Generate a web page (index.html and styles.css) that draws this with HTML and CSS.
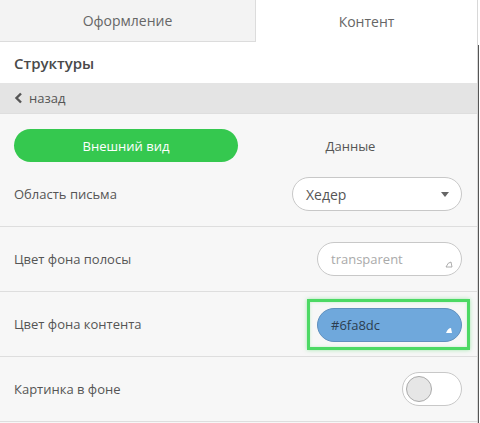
FILE: index.html
```
<!DOCTYPE html>
<html lang="ru">
<head>
    <meta charset="UTF-8">
    <meta name="viewport" content="width=device-width, initial-scale=1.0">
    <title>Контент</title>
    <link rel="stylesheet" href="styles.css">
</head>
<body>
    <div class="wrap">
        <div class="panel">
            <div class="tabs">
                <div class="tab">Оформление</div>
                <div class="tab active">Контент</div>
            </div>
            <div class="title">Структуры</div>
            <div class="back">
                <svg width="9" height="12" viewBox="0 0 9 12"><path d="M7 1.5 L2.5 6 L7 10.5" fill="none" stroke="#555" stroke-width="2.4"/></svg>
                <span>назад</span>
            </div>
            <div class="content">
                <div class="switcher">
                    <div class="seg on">Внешний вид</div>
                    <div class="seg">Данные</div>
                </div>
                <div class="row">
                    <span class="label">Область письма</span>
                    <div class="select">
                        <span>Хедер</span>
                        <svg width="8" height="5" viewBox="0 0 8 5"><path d="M0 0 H8 L4 5 Z" fill="#666"/></svg>
                    </div>
                </div>
                <div class="row">
                    <span class="label">Цвет фона полосы</span>
                    <div class="field empty">
                        <span>transparent</span>
                        <svg class="grip" width="8" height="7" viewBox="0 0 8 7"><path d="M1 6 Q3 1 6 1 L7 6 Z" fill="none" stroke="#999" stroke-width="0.8"/></svg>
                    </div>
                </div>
                <div class="row">
                    <span class="label">Цвет фона контента</span>
                    <div class="focus">
                        <div class="field filled" style="background-color: #6fa8dc;">
                            <span>#6fa8dc</span>
                            <svg class="grip" width="8" height="7" viewBox="0 0 8 7"><path d="M1 6 Q3 1 6 1 L7 6 Z" fill="#fff"/></svg>
                        </div>
                    </div>
                </div>
                <div class="row">
                    <span class="label">Картинка в фоне</span>
                    <div class="toggle"><div class="knob"></div></div>
                </div>
            </div>
        </div>
        <div class="track"><div class="thumb"></div></div>
    </div>
</body>
</html>
```

FILE: styles.css
```
body {
    margin: 0;
    font-family: "Open Sans", "Noto Sans", Arial, sans-serif;
    font-size: 13px;
    color: #555;
    background: #fff;
}
.wrap {
    display: flex;
    height: 423px;
}
.panel {
    width: 477px;
    border-right: 1px solid #d8d8d8;
    display: flex;
    flex-direction: column;
    background: #f7f7f7;
}
.track {
    width: 2px;
    padding-top: 45px;
}
.thumb {
    width: 1px;
    height: 378px;
    background: #555;
}
.tabs {
    display: flex;
    height: 42px;
    background: #fff;
}
.tab {
    flex: 1;
    display: flex;
    align-items: center;
    justify-content: center;
    font-size: 14px;
    color: #666;
}
.tab:first-child {
    flex: 0 0 255px;
    background: #f3f3f3;
    border-right: 1px solid #dcdcdc;
    border-bottom: 1px solid #dcdcdc;
}
.tab.active {
    background: #fff;
}
.title {
    height: 41px;
    display: flex;
    align-items: center;
    padding-left: 14px;
    font-size: 15px;
    font-weight: 600;
    color: #4a4a4a;
    background: #fff;
}
.back {
    height: 30px;
    display: flex;
    align-items: center;
    gap: 6px;
    padding-left: 14px;
    background: #e4e4e4;
    border-bottom: 1px solid #dedede;
    color: #555;
}
.content {
    padding-top: 15px;
}
.switcher {
    display: flex;
    padding: 0 14px;
}
.seg {
    flex: 1;
    height: 33px;
    display: flex;
    align-items: center;
    justify-content: center;
    border-radius: 17px;
    color: #555;
}
.seg.on {
    flex: 0 0 224px;
    background: #35c84f;
    color: #fff;
}
.row {
    height: 64px;
    display: flex;
    align-items: center;
    justify-content: space-between;
    padding: 0 15px 0 14px;
    border-bottom: 1px solid #dedede;
}
.label {
    color: #555;
}
.select, .field {
    border: 1px solid #c8c8c8;
    border-radius: 17px;
    background: #fff;
    display: flex;
    align-items: center;
    box-sizing: border-box;
    height: 34px;
}
.select {
    width: 170px;
    justify-content: space-between;
    padding: 0 12px 0 13px;
}
.select span {
    font-size: 14px;
    color: #555;
}
.field {
    width: 145px;
    padding-left: 13px;
    position: relative;
}
.field.empty span {
    color: #aaa;
}
.field.filled {
    border-color: #5f90be;
    color: #2c3e50;
}
.grip {
    position: absolute;
    right: 8px;
    bottom: 7px;
}
.focus {
    padding: 6px 5px 5px 7px;
    border: 3px solid #4cd964;
    box-shadow: 0 0 4px rgba(76, 217, 100, 0.5), inset 0 0 3px rgba(76, 217, 100, 0.3);
    margin-right: -8px;
}
.toggle {
    width: 60px;
    height: 34px;
    box-sizing: border-box;
    border: 1px solid #c8c8c8;
    border-radius: 17px;
    background: #fff;
    display: flex;
    align-items: center;
    padding-left: 3px;
}
.knob {
    width: 26px;
    height: 26px;
    box-sizing: border-box;
    border-radius: 50%;
    background: #e6e6e6;
    border: 1px solid #aaa;
}
```
